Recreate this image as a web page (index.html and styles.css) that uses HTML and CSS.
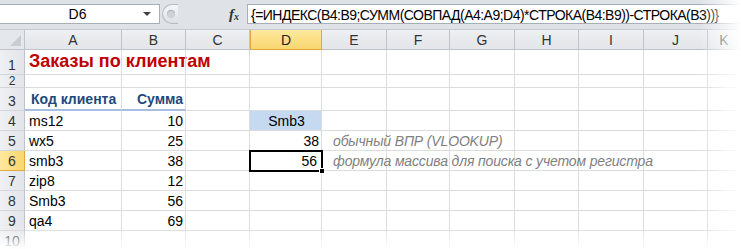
FILE: index.html
```html
<!DOCTYPE html>
<html lang="ru">
<head>
    <meta charset="UTF-8">
    <title>Заказы по клиентам</title>
    <link rel="stylesheet" href="styles.css">
</head>
<body>
    <div class="app">
        <div class="formula-bar">
            <div class="name-box"><span class="ref">D6</span><span class="drop"></span></div>
            <div class="grip"><span class="dot"></span></div>
            <div class="fx">f<sub>x</sub></div>
            <div class="formula">{=ИНДЕКС(B4:B9;СУММ(СОВПАД(A4:A9;D4)*СТРОКА(B4:B9))-СТРОКА(B3))}</div>
        </div>

        <div class="sheet">
            <!-- column headers -->
            <div class="corner"><span class="tri"></span></div>
            <div class="ch">A</div><div class="ch">B</div><div class="ch">C</div>
            <div class="ch sel">D</div><div class="ch">E</div><div class="ch">F</div>
            <div class="ch">G</div><div class="ch">H</div><div class="ch">I</div>
            <div class="ch">J</div><div class="ch">K</div>

            <!-- 1 -->
            <div class="rh">1</div>
            <div class="c title">Заказы по клиентам</div><div class="c"></div><div class="c"></div>
            <div class="c"></div><div class="c"></div><div class="c"></div><div class="c"></div>
            <div class="c"></div><div class="c"></div><div class="c"></div><div class="c"></div>

            <!-- 2 -->
            <div class="rh small">2</div>
            <div class="c"></div><div class="c"></div><div class="c"></div>
            <div class="c"></div><div class="c"></div><div class="c"></div><div class="c"></div>
            <div class="c"></div><div class="c"></div><div class="c"></div><div class="c"></div>

            <!-- 3 -->
            <div class="rh">3</div>
            <div class="c head">Код клиента</div><div class="c head num">Сумма</div><div class="c"></div>
            <div class="c"></div><div class="c"></div><div class="c"></div><div class="c"></div>
            <div class="c"></div><div class="c"></div><div class="c"></div><div class="c"></div>

            <!-- 4 -->
            <div class="rh">4</div>
            <div class="c">ms12</div><div class="c num">10</div><div class="c"></div>
            <div class="c lookup">Smb3</div><div class="c"></div><div class="c"></div><div class="c"></div>
            <div class="c"></div><div class="c"></div><div class="c"></div><div class="c"></div>

            <!-- 5 -->
            <div class="rh">5</div>
            <div class="c">wx5</div><div class="c num">25</div><div class="c"></div>
            <div class="c num">38</div><div class="c note">обычный ВПР (VLOOKUP)</div><div class="c"></div><div class="c"></div>
            <div class="c"></div><div class="c"></div><div class="c"></div><div class="c"></div>

            <!-- 6 -->
            <div class="rh sel">6</div>
            <div class="c">smb3</div><div class="c num">38</div><div class="c"></div>
            <div class="c num active">56<span class="handle"></span></div><div class="c note">формула массива для поиска с учетом регистра</div><div class="c"></div><div class="c"></div>
            <div class="c"></div><div class="c"></div><div class="c"></div><div class="c"></div>

            <!-- 7 -->
            <div class="rh">7</div>
            <div class="c">zip8</div><div class="c num">12</div><div class="c"></div>
            <div class="c"></div><div class="c"></div><div class="c"></div><div class="c"></div>
            <div class="c"></div><div class="c"></div><div class="c"></div><div class="c"></div>

            <!-- 8 -->
            <div class="rh">8</div>
            <div class="c">Smb3</div><div class="c num">56</div><div class="c"></div>
            <div class="c"></div><div class="c"></div><div class="c"></div><div class="c"></div>
            <div class="c"></div><div class="c"></div><div class="c"></div><div class="c"></div>

            <!-- 9 -->
            <div class="rh">9</div>
            <div class="c">qa4</div><div class="c num">69</div><div class="c"></div>
            <div class="c"></div><div class="c"></div><div class="c"></div><div class="c"></div>
            <div class="c"></div><div class="c"></div><div class="c"></div><div class="c"></div>

            <!-- 10 -->
            <div class="rh">10</div>
            <div class="c"></div><div class="c"></div><div class="c"></div>
            <div class="c"></div><div class="c"></div><div class="c"></div><div class="c"></div>
            <div class="c"></div><div class="c"></div><div class="c"></div><div class="c"></div>
        </div>

        <div class="fade"></div>
    </div>
</body>
</html>
```

FILE: styles.css
```css
* { box-sizing: border-box; }
body { margin: 0; background: #fff; font-family: "Liberation Sans", Arial, sans-serif; color: #000; }
.app { position: relative; width: 741px; height: 249px; overflow: hidden; }

/* formula bar */
.formula-bar { display: flex; height: 30px; padding: 4px 0 5px; background: #dfe3e8; border-bottom: 1px solid #c5cad1; }
.name-box { width: 160px; display: flex; align-items: center; background: #fff; border: 1px solid #a7aeb8; border-left: none; }
.name-box .ref { flex: 1; text-align: center; font-size: 14px; padding-left: 12px; }
.name-box .drop { width: 0; height: 0; margin-right: 8px; border-left: 4px solid transparent; border-right: 4px solid transparent; border-top: 4px solid #444; }
.grip { width: 16px; margin-left: 2px; border-radius: 10px 0 0 10px; background: linear-gradient(#f6f7f9, #dcdfe4); border: 1px solid #b5bbc4; border-right: none; display: flex; align-items: center; justify-content: center; }
.grip .dot { width: 8px; height: 8px; border-radius: 50%; background: #cfd3d9; box-shadow: inset 0 1px 1px #aab0b8; }
.fx { width: 69px; text-align: right; padding-right: 8px; font-family: "Liberation Serif", serif; font-style: italic; font-weight: bold; font-size: 15px; color: #333; line-height: 20px; }
.fx sub { font-size: 10px; vertical-align: -1px; }
.formula { flex: 1; background: #fff; border: 1px solid #a7aeb8; border-right: none; padding: 1px 0 0 3px; font-size: 14px; line-height: 18px; white-space: nowrap; letter-spacing: -0.52px; }

/* grid */
.sheet { display: grid; grid-template-columns: 25px 97px 64px 64px 72px 65px 63px 65px 64px 65px 64px 1fr; grid-template-rows: 20px 25px 13px 23px repeat(7, 20px); font-size: 14px; }
.corner { background: #e4e7eb; border-right: 1px solid #c0c4ca; border-bottom: 1px solid #c0c4ca; position: relative; }
.corner .tri { position: absolute; right: 3px; bottom: 3px; width: 0; height: 0; border-left: 11px solid transparent; border-bottom: 11px solid #c9ccd1; }
.ch { background: linear-gradient(#eef0f3, #e2e5e9); border-right: 1px solid #c0c4ca; border-bottom: 1px solid #c0c4ca; display: flex; align-items: center; justify-content: center; font-size: 14px; color: #333; }
.ch.sel { background: linear-gradient(#fde99e, #f9d66f); border: 1px solid #e3a93a; border-top: none; color: #222; }
.rh { background: linear-gradient(90deg, #eef0f3, #e2e5e9); border-right: 1px solid #c0c4ca; border-bottom: 1px solid #d2d5d9; display: flex; align-items: flex-end; justify-content: center; font-size: 14px; color: #333; padding-bottom: 1px; }
.rh.small { font-size: 12px; line-height: 12px; padding-bottom: 0; }
.rh.sel { background: linear-gradient(90deg, #fde99e, #f9d66f); border-right: 1px solid #e3a93a; border-bottom: 1px solid #e3a93a; }
.c { border-right: 1px solid #dadcdd; border-bottom: 1px solid #dadcdd; display: flex; align-items: flex-end; padding: 0 2px 1px 4px; white-space: nowrap; overflow: visible; position: relative; }
.c.num { justify-content: flex-end; }
.c.title { font-size: 18px; font-weight: bold; color: #c00000; padding-bottom: 2px; }
.c.head { font-weight: bold; color: #1f497d; border-bottom: 2px solid #a7bfde; padding-bottom: 2px; padding-left: 6px; }
.c.lookup { background: #c5d9f1; justify-content: center; }
.c.note { font-style: italic; color: #7f7f7f; padding-left: 11px; letter-spacing: -0.15px; z-index: 1; }
.c.active { outline: 2px solid #000; outline-offset: -1px; z-index: 2; padding-right: 4px; }
.handle { position: absolute; right: -4px; bottom: -4px; width: 6px; height: 6px; background: #000; border: 1px solid #fff; }

/* soft edges of the screenshot */
.fade { position: absolute; inset: 0; pointer-events: none; z-index: 5;
    background: linear-gradient(90deg, rgba(255,255,255,0) 700px, #fff 741px),
                linear-gradient(rgba(255,255,255,0) 228px, #fff 249px); }
```
